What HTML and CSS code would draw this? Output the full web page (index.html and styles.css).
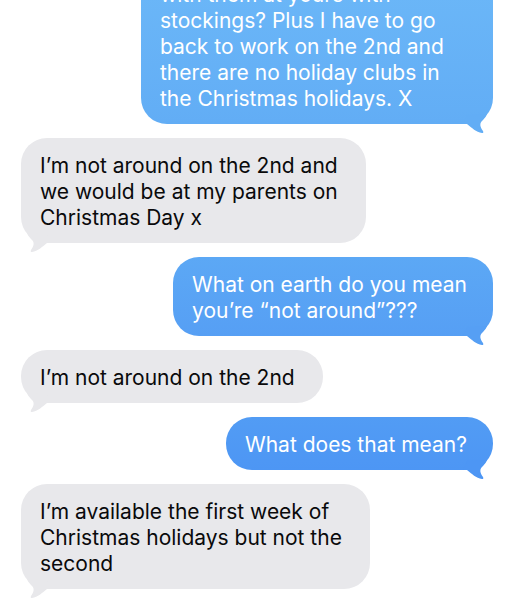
FILE: index.html
```html
<!DOCTYPE html>
<html lang="en">
<head>
<meta charset="utf-8">
<meta name="viewport" content="width=device-width, initial-scale=1">
<title>Messages</title>
<link rel="stylesheet" href="styles.css">
</head>
<body>
<svg width="0" height="0" class="defs" aria-hidden="true">
  <symbol id="tail" viewBox="0 0 30 31">
    <path d="M24 11Q23 14 20 17C16 20 17 24 20 28Q21 30 19 30C13 29 9 25 4 21L0 21L4 12Z"/>
  </symbol>
</svg>
<main class="thread">
  <p class="bubble sent first">with them at yours with<br>stockings? Plus I have to go<br>back to work on the 2nd and<br>there are no holiday clubs in<br>the Christmas holidays. X<svg class="tail" aria-hidden="true"><use href="#tail"/></svg></p>
  <p class="bubble received">I’m not around on the 2nd and<br>we would be at my parents on<br>Christmas Day x<svg class="tail" aria-hidden="true"><use href="#tail"/></svg></p>
  <p class="bubble sent second">What on earth do you mean<br>you’re “not around”???<svg class="tail" aria-hidden="true"><use href="#tail"/></svg></p>
  <p class="bubble received">I’m not around on the 2nd<svg class="tail" aria-hidden="true"><use href="#tail"/></svg></p>
  <p class="bubble sent third">What does that mean?<svg class="tail" aria-hidden="true"><use href="#tail"/></svg></p>
  <p class="bubble received">I’m available the first week of<br>Christmas holidays but not the<br>second<svg class="tail" aria-hidden="true"><use href="#tail"/></svg></p>
</main>
</body>
</html>
```
FILE: styles.css
```css
* {
  box-sizing: border-box;
}

body {
  margin: 0;
  background: #fff;
  font-family: Inter, "Liberation Sans", sans-serif;
  font-size: 21px;
  line-height: 26px;
}

.defs {
  position: absolute;
}

/* The newest message stays at the bottom; older ones run off the top. */
.thread {
  display: flex;
  flex-direction: column;
  justify-content: flex-end;
  gap: 14px;
  height: 100vh;
  padding: 0 22px 11px 21px;
  overflow: hidden;
}

.bubble {
  position: relative;
  flex: none;
  margin: 0;
  border-radius: 26px;
  white-space: nowrap;
}

.sent {
  align-self: flex-end;
  padding: 15px 26px 12px 19px;
  color: #fff;
}

.received {
  align-self: flex-start;
  padding: 15px 28px 12px 19px;
  background: #e8e8eb;
  color: #0a0a0b;
}

.first {
  min-width: 352px;
  background: linear-gradient(#6cb8f8, #62adf5);
}

.second {
  background: linear-gradient(#5ca8f5, #569ff4);
}

.third {
  background: linear-gradient(#529cf4, #4d96f4);
}

.tail {
  position: absolute;
  right: 0;
  bottom: -10px;
  width: 30px;
  height: 31px;
}

.first .tail {
  fill: #62adf5;
}

.second .tail {
  fill: #569ff4;
}

.third .tail {
  fill: #4d96f4;
}

.received .tail {
  right: auto;
  left: 0;
  fill: #e8e8eb;
  transform: scaleX(-1);
}
```
